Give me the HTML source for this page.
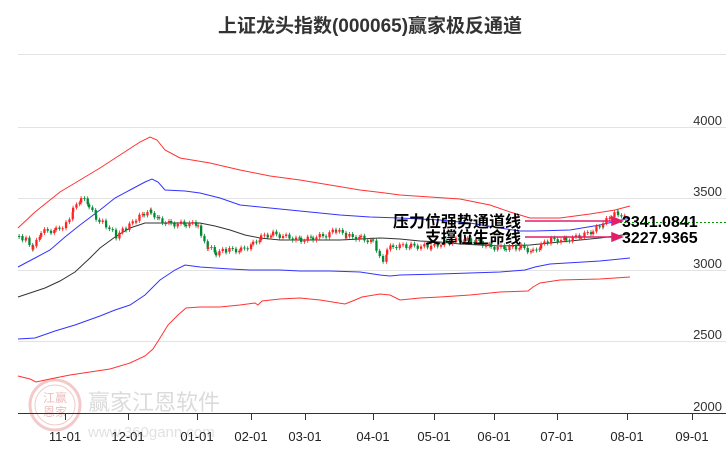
<!DOCTYPE html><html><head><meta charset="utf-8"><style>
body{margin:0;background:#fff;width:726px;height:450px;overflow:hidden}
svg{display:block}
text{font-family:"Liberation Sans","Noto Sans CJK SC",sans-serif}
</style></head><body>
<svg id="s" width="726" height="450" viewBox="0 0 726 450">
<text x="370" y="32" text-anchor="middle" font-size="19" font-weight="bold" fill="#333">上证龙头指数(000065)赢家极反通道</text>
<g stroke="#e3e3e3" stroke-width="1">
<line x1="18" y1="54.5" x2="726" y2="54.5"/><line x1="18" y1="127.5" x2="726" y2="127.5"/>
<line x1="18" y1="198.5" x2="726" y2="198.5"/><line x1="18" y1="270.5" x2="726" y2="270.5"/>
<line x1="18" y1="341.5" x2="726" y2="341.5"/>
</g>
<g font-size="13" fill="#333" text-anchor="end">
<text x="722" y="125">4000</text><text x="722" y="196">3500</text><text x="722" y="268">3000</text><text x="722" y="339">2500</text><text x="722" y="411">2000</text>
</g>
<g opacity="0.35">
<circle cx="55" cy="405" r="25" fill="none" stroke="#d66" stroke-width="3"/>
<circle cx="55" cy="405" r="20" fill="none" stroke="#d66" stroke-width="1"/>
<text x="55" y="402" text-anchor="middle" font-size="12" fill="#c44">江赢</text>
<text x="55" y="416" text-anchor="middle" font-size="12" fill="#c44">恩家</text>
<text x="88" y="410" font-size="22" fill="#999">赢家江恩软件</text>
<text x="88" y="437" font-size="15" fill="#aaa">www.360gann.com</text>
</g>
<line x1="18" y1="413.5" x2="726" y2="413.5" stroke="#333"/>
<g stroke="#333"><line x1="65.5" y1="413" x2="65.5" y2="420"/><line x1="128.5" y1="413" x2="128.5" y2="420"/><line x1="197.5" y1="413" x2="197.5" y2="420"/><line x1="251.5" y1="413" x2="251.5" y2="420"/><line x1="305.5" y1="413" x2="305.5" y2="420"/><line x1="373.5" y1="413" x2="373.5" y2="420"/><line x1="434.5" y1="413" x2="434.5" y2="420"/><line x1="494.5" y1="413" x2="494.5" y2="420"/><line x1="557.5" y1="413" x2="557.5" y2="420"/><line x1="627.5" y1="413" x2="627.5" y2="420"/><line x1="692.5" y1="413" x2="692.5" y2="420"/></g>
<g font-size="13" fill="#222" text-anchor="middle">
<text x="65" y="441">11-01</text><text x="128" y="441">12-01</text><text x="197" y="441">01-01</text><text x="251" y="441">02-01</text><text x="305" y="441">03-01</text><text x="373" y="441">04-01</text><text x="434" y="441">05-01</text><text x="494" y="441">06-01</text><text x="557" y="441">07-01</text><text x="627" y="441">08-01</text><text x="692" y="441">09-01</text>
</g>
<g fill="none" stroke-width="1">
<polyline stroke="#f33" points="18,228 35,212 60,192 80,180 100,168 120,155 140,142 150,137 157,140 165,150 180,158 210,163 240,170 270,176 300,180 330,185 360,190 385,193 400,195 430,197 460,199 490,205 510,212 530,218 560,218 590,214 615,210 630,206"/>
<polyline stroke="#33f" points="18,267 35,258 50,250 65,237 80,225 100,210 115,198 130,190 145,182 152,179 158,182 165,190 185,191 200,193 220,198 240,205 260,207 290,210 320,213 340,215 370,217 400,218 440,220 470,223 500,228 520,231 535,231 570,230 600,225 630,218"/>
<polyline stroke="#333" points="18,297 30,293 45,288 60,281 75,272 90,258 100,248 115,237 130,228 145,223 155,223 180,223 200,223 215,226 230,230 245,235 260,238 280,240 300,240 320,240 340,240 360,239 380,238 400,239 420,241 440,242 460,244 480,245 500,246 530,245 560,242 580,240 600,238 630,234"/>
<polyline stroke="#33f" points="18,339 35,338 55,331 75,325 100,316 115,310 130,305 145,295 160,280 175,270 185,265 200,267 230,269 250,270 280,270 300,271 330,271 360,272 380,275 390,276 400,275 440,274 470,273 500,272 525,270 535,267 550,264 600,261 630,258"/>
<polyline stroke="#f33" points="18,376 30,379 36,382 50,379 70,375 90,372 110,369 130,363 145,356 153,349 160,338 168,325 178,315 186,308 200,307 220,307 240,305 255,303 258,305 262,301 280,299 300,298 320,300 345,304 355,300 362,297 380,294 390,295 400,300 420,298 440,297 470,295 500,292 528,291 533,287 540,283 560,280 600,279 630,277"/>
</g>
<g id="c"></g>
<line x1="620" y1="222.5" x2="726" y2="222.5" stroke="#090" stroke-dasharray="2,2"/>
<g stroke="#e0206a" stroke-width="1.5" fill="#e0206a">
<line x1="525" y1="221" x2="612" y2="221"/><path d="M612,217 L622,221 612,225Z"/>
<line x1="525" y1="237" x2="612" y2="237"/><path d="M612,233 L622,237 612,241Z"/>
</g>
<g font-size="16" font-weight="bold" fill="#000">
<text x="393" y="227">压力位强势通道线</text>
<text x="425" y="243">支撑位生命线</text>
<text x="622" y="227">3341.0841</text>
<text x="622" y="243">3227.9365</text>
</g>
</svg>
<script>
var pts=[[18,236],[25,240],[32,248],[40,232],[55,230],[65,224],[72,210],[80,198],[88,205],[95,218],[105,225],[115,236],[125,228],[135,220],[143,213],[150,212],[158,220],[170,224],[185,224],[197,224],[200,238],[207,247],[215,253],[225,250],[240,250],[252,244],[260,237],[272,234],[285,237],[300,240],[312,238],[325,235],[335,230],[345,236],[360,238],[372,242],[382,262],[386,250],[392,246],[410,246],[430,247],[445,242],[460,240],[475,241],[490,247],[505,248],[520,247],[532,252],[540,245],[550,240],[565,240],[580,236],[592,231],[602,224],[610,215],[617,213],[625,219]];
var g=document.getElementById('c'),h='',p=[];
for(var i=0;i<pts.length-1;i++){var a=pts[i],b=pts[i+1];for(var x=a[0];x<b[0];x+=3.3){p.push([x,a[1]+(b[1]-a[1])*(x-a[0])/(b[0]-a[0])]);}}
var prev=p[0][1];
for(var i=0;i<p.length;i++){var x=p[i][0],y=p[i][1]+Math.sin(i*1.7)*2.5;var up=y<prev;var t=Math.min(y,prev),bt=Math.max(y,prev);if(bt-t<1)bt=t+1;var col=up?'#f22':'#083';
h+='<line x1="'+(x+1.1)+'" y1="'+(t-2)+'" x2="'+(x+1.1)+'" y2="'+(bt+2)+'" stroke="'+col+'" stroke-width="0.8"/><rect x="'+x+'" y="'+t+'" width="2.3" height="'+(bt-t)+'" fill="'+col+'"/>';prev=y;}
g.innerHTML=h;
</script>
</body></html>
